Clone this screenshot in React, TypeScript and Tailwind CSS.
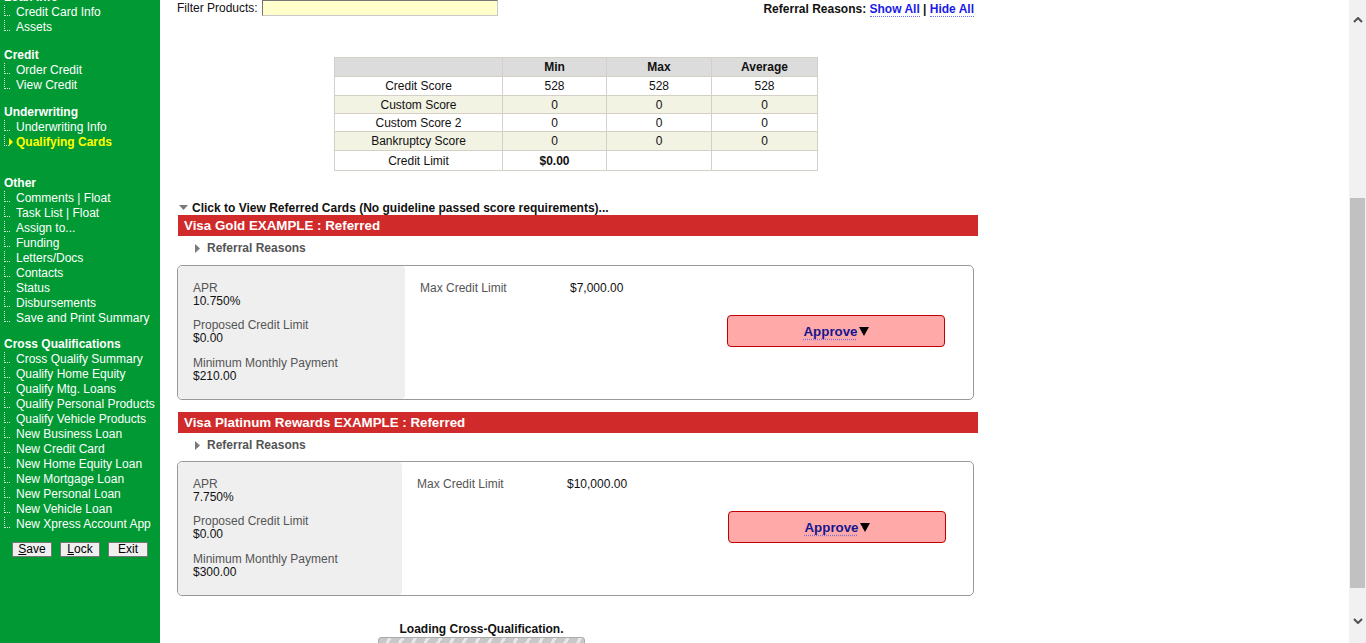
import React from 'react';

const sections = [
  { title: 'Loan Info', cls: '-mt-[10px]', items: ['Credit Card Info', 'Assets'] },
  { title: 'Credit', cls: 'mt-[13px]', items: ['Order Credit', 'View Credit'] },
  { title: 'Underwriting', cls: 'mt-[12px]', items: ['Underwriting Info', 'Qualifying Cards'] },
  {
    title: 'Other',
    cls: 'mt-[26px]',
    items: [
      'Comments | Float',
      'Task List | Float',
      'Assign to...',
      'Funding',
      'Letters/Docs',
      'Contacts',
      'Status',
      'Disbursements',
      'Save and Print Summary'
    ]
  },
  {
    title: 'Cross Qualifications',
    cls: 'mt-[11px]',
    items: [
      'Cross Qualify Summary',
      'Qualify Home Equity',
      'Qualify Mtg. Loans',
      'Qualify Personal Products',
      'Qualify Vehicle Products',
      'New Business Loan',
      'New Credit Card',
      'New Home Equity Loan',
      'New Mortgage Loan',
      'New Personal Loan',
      'New Vehicle Loan',
      'New Xpress Account App'
    ]
  }
];

const scores = [
  { name: 'Credit Score', min: '528', max: '528', avg: '528', bg: 'bg-white h-[19px]' },
  { name: 'Custom Score', min: '0', max: '0', avg: '0', bg: 'bg-[#f2f3e3] h-[18px]' },
  { name: 'Custom Score 2', min: '0', max: '0', avg: '0', bg: 'bg-white h-[18px]' },
  { name: 'Bankruptcy Score', min: '0', max: '0', avg: '0', bg: 'bg-[#f2f3e3] h-[19px]' }
];

const cards = [
  {
    id: 'gold',
    title: 'Visa Gold EXAMPLE : Referred',
    apr: '10.750%',
    limit: '$0.00',
    payment: '$210.00',
    max: '$7,000.00',
    panel: 'w-[227px]',
    btn: 'mr-[28px]',
    box: 'mt-[6px]'
  },
  {
    id: 'platinum',
    title: 'Visa Platinum Rewards EXAMPLE : Referred',
    apr: '7.750%',
    limit: '$0.00',
    payment: '$300.00',
    max: '$10,000.00',
    panel: 'w-[224px]',
    btn: 'mr-[27px]',
    box: 'mt-[5px]'
  }
];

const Sidebar = () => (
  <div className="w-[160px] shrink-0 bg-[#009933] text-white text-[12px]">
    {sections.map(section => (
      <div key={section.title} className={section.cls}>
        <div className="pl-[4px] font-bold leading-[15px]">{section.title}</div>
        {section.items.map(item =>
          item === 'Qualifying Cards' ? (
            <div key={item} className="flex items-start h-[15px] leading-[15px]">
              <span className="ml-[4px] w-[5px] h-[11px] border-l border-b border-dotted border-[#d8efdc]" />
              <svg width="4" height="8" viewBox="0 0 4 8" className="mt-[3px]">
                <path d="M0 0 L4 4 L0 8 Z" fill="#ffff00" />
              </svg>
              <span className="ml-[3px] font-bold text-[#ffff00]">{item}</span>
            </div>
          ) : (
            <div key={item} className="flex items-start h-[15px] leading-[15px]">
              <span className="ml-[4px] w-[6px] h-[11px] border-l border-b border-dotted border-[#d8efdc]" />
              <span className="ml-[6px] whitespace-nowrap">{item}</span>
            </div>
          )
        )}
      </div>
    ))}
    <div className="mt-[10px] pl-[12px] flex gap-[8px] text-black">
      <button className="w-[40px] h-[15px] leading-[13px] bg-[#efefef] border border-[#767676] text-[12px]">
        <u>S</u>ave
      </button>
      <button className="w-[40px] h-[15px] leading-[13px] bg-[#efefef] border border-[#767676] text-[12px]">
        <u>L</u>ock
      </button>
      <button className="w-[40px] h-[15px] leading-[13px] bg-[#efefef] border border-[#767676] text-[12px]">
        Exit
      </button>
    </div>
  </div>
);

const RightTri = () => (
  <svg width="5" height="9" viewBox="0 0 5 9">
    <path d="M0 0 L5 4.5 L0 9 Z" fill="#7a7a7a" />
  </svg>
);

const Card = ({ card }: { card: (typeof cards)[number] }) => (
  <div>
    <div className="ml-[1px] w-[800px] h-[21px] bg-[#d12a2a] text-white font-bold text-[13.33px] leading-[21px] pl-[6px]">
      {card.title}
    </div>
    <div className="flex items-center h-[22px] pl-[18px] mt-[1px]">
      <RightTri />
      <span className="ml-[7px] font-bold text-[#555]">Referral Reasons</span>
    </div>
    <div className={`${card.box} w-[797px] h-[135px] border border-[#999] rounded-[5px] flex overflow-hidden`}>
      <div className={`${card.panel} bg-[#efefef] rounded-[4px] pl-[15px] pt-[15px]`}>
        <div className="text-[#555] leading-[14px]">APR</div>
        <div className="leading-[13px] mb-[10px]">{card.apr}</div>
        <div className="text-[#555] leading-[14px]">Proposed Credit Limit</div>
        <div className="leading-[13px] mb-[11px]">{card.limit}</div>
        <div className="text-[#555] leading-[14px]">Minimum Monthly Payment</div>
        <div className="leading-[13px]">{card.payment}</div>
      </div>
      <div className="flex-1 flex">
        <div className="pl-[15px] pt-[15px] flex self-start leading-[14px]">
          <span className="w-[150px] text-[#555]">Max Credit Limit</span>
          <span>{card.max}</span>
        </div>
        <button
          className={`ml-auto self-center ${card.btn} mb-[4px] w-[218px] h-[32px] bg-[#ffa9a9] border border-[#c00000] rounded-[4px] flex items-center justify-center`}
        >
          <span className="mt-[2px] font-bold text-[13.33px] text-[#16168f] underline decoration-dotted decoration-[#7b6fd0] underline-offset-[3px]">
            Approve
          </span>
          <svg width="10" height="9" viewBox="0 0 10 9" className="ml-[1px] mt-[2px]">
            <path d="M0 0 L10 0 L5 9 Z" fill="#000" />
          </svg>
        </button>
      </div>
    </div>
  </div>
);

export default function App() {
  return (
    <div className="w-[1366px] h-[643px] overflow-hidden flex font-['Liberation_Sans',Arial,sans-serif] text-[12px] text-[#111]">
      <Sidebar />
      <div className="flex-1 bg-white pl-[17px]">
        <div className="w-[800px]">
          <div className="flex items-start justify-between h-[17px]">
            <div className="flex items-center">
              <span className="leading-[16px]">Filter Products:</span>
              <span className="ml-[4px] w-[236px] h-[16px] bg-[#ffffcc] border border-[#767676] border-r-[#c8c8c8] border-b-[#c8c8c8]" />
            </div>
            <div className="pr-[3px] pt-[2px] leading-[14px] font-bold">
              <span>Referral Reasons: </span>
              <a className="text-[#1a1ae6] border-b border-dotted border-[#6a6aff]">Show All</a>
              <span> | </span>
              <a className="text-[#1a1ae6] border-b border-dotted border-[#6a6aff]">Hide All</a>
            </div>
          </div>

          <table className="ml-[157px] mt-[40px] border-collapse text-center leading-[14px]">
            <thead>
              <tr className="bg-[#dcdcdc] h-[19px]">
                <th className="w-[168px] border border-[#d4d0c8] p-0" />
                <th className="w-[104px] border border-[#d4d0c8] p-0 font-bold">Min</th>
                <th className="w-[105px] border border-[#d4d0c8] p-0 font-bold">Max</th>
                <th className="w-[106px] border border-[#d4d0c8] p-0 font-bold">Average</th>
              </tr>
            </thead>
            <tbody>
              {scores.map(row => (
                <tr key={row.name} className={row.bg}>
                  <td className="border border-[#d4d0c8] p-0">{row.name}</td>
                  <td className="border border-[#d4d0c8] p-0">{row.min}</td>
                  <td className="border border-[#d4d0c8] p-0">{row.max}</td>
                  <td className="border border-[#d4d0c8] p-0">{row.avg}</td>
                </tr>
              ))}
              <tr className="bg-white h-[20px]">
                <td className="border border-[#d4d0c8] p-0">Credit Limit</td>
                <td className="border border-[#d4d0c8] p-0 font-bold">$0.00</td>
                <td className="border border-[#d4d0c8] p-0" />
                <td className="border border-[#d4d0c8] p-0" />
              </tr>
            </tbody>
          </table>

          <div className="mt-[29px] flex items-center h-[15px] pl-[2px] font-bold">
            <svg width="9" height="5" viewBox="0 0 9 5">
              <path d="M0 0 L9 0 L4.5 5 Z" fill="#7a7a7a" />
            </svg>
            <span className="ml-[4px]">Click to View Referred Cards (No guideline passed score requirements)...</span>
          </div>

          <Card card={cards[0]} />
          <div className="mt-[12px]">
            <Card card={cards[1]} />
          </div>

          <div className="mt-[26px] ml-[201px] w-[207px] flex flex-col items-center">
            <div className="font-bold leading-[14px]">Loading Cross-Qualification.</div>
            <div className="mt-[1px] w-[207px] h-[14px] rounded-t-[3px] border border-[#aaa] bg-[repeating-linear-gradient(120deg,#c8c8c8_0px,#c8c8c8_8px,#e8e8e8_8px,#e8e8e8_11px)]" />
          </div>
        </div>
      </div>
      <div className="w-[17px] shrink-0 bg-[#f1f1f1] flex flex-col">
        <div className="h-[17px] flex items-center justify-center mt-[11px]">
          <svg width="10" height="6" viewBox="0 0 10 6">
            <path d="M1 5 L5 1 L9 5" stroke="#505050" strokeWidth="2" fill="none" />
          </svg>
        </div>
        <div className="mt-[170px] ml-[1px] w-[15px] h-[390px] bg-[#c1c1c1]" />
        <div className="h-[17px] flex items-center justify-center mt-[24px]">
          <svg width="10" height="6" viewBox="0 0 10 6">
            <path d="M1 1 L5 5 L9 1" stroke="#505050" strokeWidth="2" fill="none" />
          </svg>
        </div>
      </div>
    </div>
  );
}
